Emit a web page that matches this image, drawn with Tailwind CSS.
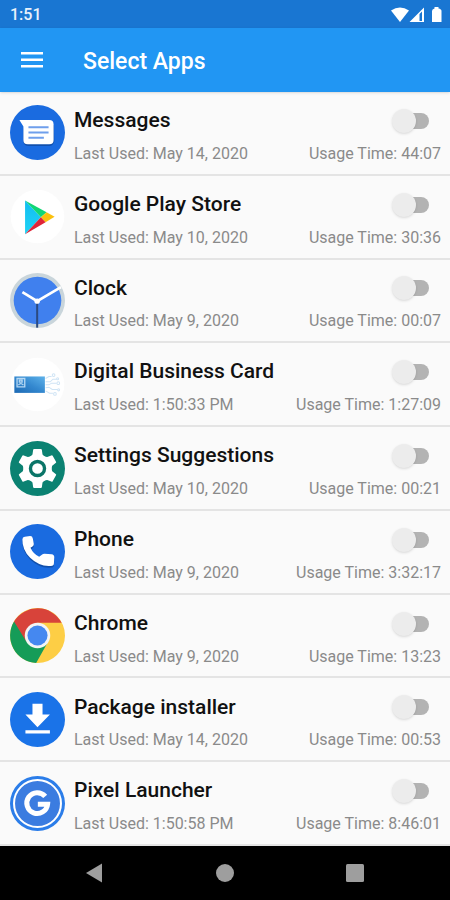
<!DOCTYPE html>
<html lang="en">
<head>
<meta charset="utf-8">
<meta name="viewport" content="width=device-width, initial-scale=1">
<title>Select Apps</title>
<script src="https://cdn.jsdelivr.net/npm/@tailwindcss/browser@4"></script>
</head>
<body class="flex min-h-screen flex-col bg-[#fafafa] font-['Roboto',sans-serif] text-[#111]">

<div class="flex h-7 shrink-0 items-center justify-between bg-[#1976d2] pt-0.5 pr-2 pl-2.5 text-white">
  <span class="text-base font-medium text-white/90">1:51</span>
  <svg class="h-4 w-[52px]" viewBox="0 0 52 16" fill="#fff" aria-hidden="true">
    <path d="M1 3.600Q10 -2.800 19 3.600L10 15z"/>
    <path fill-rule="evenodd" d="M19.500 15L34 0.500V15zM29.500 7V14H32V4.500z"/>
    <path d="M44.500 1.500V0h4v1.500Q51.500 2 51.500 4V15H42V4Q42 2 44.500 1.500z"/>
  </svg>
</div>

<header class="flex h-16 shrink-0 items-center gap-[31px] bg-[#2196f3] px-3 text-white shadow-sm">
  <button type="button" aria-label="Open menu" class="flex size-10 items-center justify-center">
    <svg class="h-4 w-[22px]" viewBox="0 0 22 16" fill="#fff"><path d="M0 0h22v2.500H0zM0 6.500h22V9H0zM0 13h22v2.500H0z"/></svg>
  </button>
  <h1 class="pt-1 text-[23px] leading-8 font-medium">Select Apps</h1>
</header>

<ul class="flex flex-1 flex-col">
  <li class="flex flex-1 items-center gap-[9px] border-b-2 border-[#e4e4e4] pr-[9px] pl-2.5">
    <svg class="size-[55px] shrink-0" viewBox="0 0 164 164" aria-hidden="true">
      <circle cx="82" cy="82" r="82" fill="#1a6be0"/>
      <path d="M40 110Q42 122 56 122H116Q130 122 132 108L131 60L40 70z" fill="#1150ad"/>
      <path d="M28 45H117Q130 45 130 58V104Q130 117 117 117H53Q40 117 40 104V64z" fill="#fff"/>
      <path d="M55 66H115M55 82H115M55 98H101" stroke="#6f9fec" stroke-width="6"/>
    </svg>
    <div class="min-w-0 flex-1 pt-2.5">
      <div class="flex h-8 items-center justify-between">
        <label for="app1" class="text-[21px] font-medium">Messages</label>
        <input id="app1" type="checkbox" role="switch" class="relative mr-3 h-6 w-[37px] appearance-none before:absolute before:top-1 before:right-0 before:h-4 before:w-8 before:rounded-full before:bg-[#b3b3b3] after:absolute after:top-0 after:left-0 after:size-6 after:rounded-full after:bg-[#ececec] after:shadow-sm checked:before:bg-[#90caf9] checked:after:left-3 checked:after:bg-[#2196f3]">
      </div>
      <p class="flex h-[34px] items-center justify-between text-base whitespace-nowrap text-[#8a8a8a]"><span>Last Used: May 14, 2020</span><span>Usage Time: 44:07</span></p>
    </div>
  </li>
  <li class="flex flex-1 items-center gap-[9px] border-b-2 border-[#e4e4e4] pr-[9px] pl-2.5">
    <svg class="size-[55px] shrink-0" viewBox="0 0 164 164" aria-hidden="true">
      <defs><linearGradient id="play" x1="0" y1="0" x2="0" y2="1"><stop offset="0" stop-color="#12bdf0"/><stop offset="1" stop-color="#1fd3f5"/></linearGradient></defs>
      <circle cx="82" cy="82" r="80" fill="#fff"/>
      <path d="M45 34L92 84L45 135z" fill="url(#play)"/>
      <path d="M45 34L109 69L92 84z" fill="#10d676"/>
      <path d="M109 69L133 83L106 99L92 84z" fill="#fbc00e"/>
      <path d="M45 135L92 84L106 99z" fill="#e02438"/>
    </svg>
    <div class="min-w-0 flex-1 pt-2.5">
      <div class="flex h-8 items-center justify-between">
        <label for="app2" class="text-[21px] font-medium">Google Play Store</label>
        <input id="app2" type="checkbox" role="switch" class="relative mr-3 h-6 w-[37px] appearance-none before:absolute before:top-1 before:right-0 before:h-4 before:w-8 before:rounded-full before:bg-[#b3b3b3] after:absolute after:top-0 after:left-0 after:size-6 after:rounded-full after:bg-[#ececec] after:shadow-sm checked:before:bg-[#90caf9] checked:after:left-3 checked:after:bg-[#2196f3]">
      </div>
      <p class="flex h-[34px] items-center justify-between text-base whitespace-nowrap text-[#8a8a8a]"><span>Last Used: May 10, 2020</span><span>Usage Time: 30:36</span></p>
    </div>
  </li>
  <li class="flex flex-1 items-center gap-[9px] border-b-2 border-[#e4e4e4] pr-[9px] pl-2.5">
    <svg class="size-[55px] shrink-0" viewBox="0 0 164 164" aria-hidden="true">
      <circle cx="82" cy="82" r="82" fill="#c9d5db"/>
      <circle cx="82" cy="82" r="71" fill="#4080ee"/>
      <path d="M81 84V163" stroke="#2c4a80" stroke-width="6"/>
      <path d="M37 57L81 84L152 42" fill="none" stroke="#fff" stroke-width="8"/>
      <circle cx="81" cy="84" r="8" fill="#fff"/>
    </svg>
    <div class="min-w-0 flex-1 pt-2.5">
      <div class="flex h-8 items-center justify-between">
        <label for="app3" class="text-[21px] font-medium">Clock</label>
        <input id="app3" type="checkbox" role="switch" class="relative mr-3 h-6 w-[37px] appearance-none before:absolute before:top-1 before:right-0 before:h-4 before:w-8 before:rounded-full before:bg-[#b3b3b3] after:absolute after:top-0 after:left-0 after:size-6 after:rounded-full after:bg-[#ececec] after:shadow-sm checked:before:bg-[#90caf9] checked:after:left-3 checked:after:bg-[#2196f3]">
      </div>
      <p class="flex h-[34px] items-center justify-between text-base whitespace-nowrap text-[#8a8a8a]"><span>Last Used: May 9, 2020</span><span>Usage Time: 00:07</span></p>
    </div>
  </li>
  <li class="flex flex-1 items-center gap-[9px] border-b-2 border-[#e4e4e4] pr-[9px] pl-2.5">
    <svg class="size-[55px] shrink-0" viewBox="0 0 164 164" aria-hidden="true">
      <defs><linearGradient id="card" x1="0" y1="1" x2="1" y2="0"><stop offset="0" stop-color="#1c69b4"/><stop offset=".5" stop-color="#3488cf"/><stop offset="1" stop-color="#5eb2ea"/></linearGradient></defs>
      <circle cx="82" cy="82" r="80" fill="#fff"/>
      <rect x="13" y="58" width="91" height="49" fill="url(#card)"/>
      <path d="M21 64H44V89H21zM28 69H36V75H28zM25 84Q32 75 40 84" fill="none" stroke="#b5d8f4" stroke-width="4"/>
      <g fill="none" stroke="#cfe4f5" stroke-width="3">
        <path d="M106 64L116 58H124M106 74H120L128 66H139M106 83H116L124 78H139M106 92L116 90L126 97H142M106 101L118 108H128"/>
        <circle cx="130" cy="54" r="4"/><circle cx="142" cy="65" r="3"/><circle cx="144" cy="78" r="4"/><circle cx="145" cy="98" r="3"/><circle cx="134" cy="110" r="4"/>
      </g>
    </svg>
    <div class="min-w-0 flex-1 pt-2.5">
      <div class="flex h-8 items-center justify-between">
        <label for="app4" class="text-[21px] font-medium">Digital Business Card</label>
        <input id="app4" type="checkbox" role="switch" class="relative mr-3 h-6 w-[37px] appearance-none before:absolute before:top-1 before:right-0 before:h-4 before:w-8 before:rounded-full before:bg-[#b3b3b3] after:absolute after:top-0 after:left-0 after:size-6 after:rounded-full after:bg-[#ececec] after:shadow-sm checked:before:bg-[#90caf9] checked:after:left-3 checked:after:bg-[#2196f3]">
      </div>
      <p class="flex h-[34px] items-center justify-between text-base whitespace-nowrap text-[#8a8a8a]"><span>Last Used: 1:50:33 PM</span><span>Usage Time: 1:27:09</span></p>
    </div>
  </li>
  <li class="flex flex-1 items-center gap-[9px] border-b-2 border-[#e4e4e4] pr-[9px] pl-2.5">
    <svg class="size-[55px] shrink-0" viewBox="0 0 164 164" aria-hidden="true">
      <defs><path id="tooth" d="M58 50L67 40L69 27Q69 24 72 24H92Q95 24 95 27L97 40L106 50z"/></defs>
      <circle cx="82" cy="82" r="82" fill="#0b8272"/>
      <g fill="#fff">
        <circle cx="82" cy="82" r="42"/>
        <use href="#tooth"/>
        <use href="#tooth" transform="rotate(60 82 82)"/>
        <use href="#tooth" transform="rotate(120 82 82)"/>
        <use href="#tooth" transform="rotate(180 82 82)"/>
        <use href="#tooth" transform="rotate(240 82 82)"/>
        <use href="#tooth" transform="rotate(300 82 82)"/>
      </g>
      <circle cx="82" cy="82" r="21" fill="#fff" stroke="#0b7568" stroke-width="10"/>
    </svg>
    <div class="min-w-0 flex-1 pt-2.5">
      <div class="flex h-8 items-center justify-between">
        <label for="app5" class="text-[21px] font-medium">Settings Suggestions</label>
        <input id="app5" type="checkbox" role="switch" class="relative mr-3 h-6 w-[37px] appearance-none before:absolute before:top-1 before:right-0 before:h-4 before:w-8 before:rounded-full before:bg-[#b3b3b3] after:absolute after:top-0 after:left-0 after:size-6 after:rounded-full after:bg-[#ececec] after:shadow-sm checked:before:bg-[#90caf9] checked:after:left-3 checked:after:bg-[#2196f3]">
      </div>
      <p class="flex h-[34px] items-center justify-between text-base whitespace-nowrap text-[#8a8a8a]"><span>Last Used: May 10, 2020</span><span>Usage Time: 00:21</span></p>
    </div>
  </li>
  <li class="flex flex-1 items-center gap-[9px] border-b-2 border-[#e4e4e4] pr-[9px] pl-2.5">
    <svg class="size-[55px] shrink-0" viewBox="0 0 164 164" aria-hidden="true">
      <defs><path id="handset" d="M37 46Q37 39 44 38L60 36Q67 36 68 43L71 60Q71 65 67 67L61 71Q69 89 87 98L95 92Q98 89 103 89L124 90Q132 91 132 99L131 117Q131 125 122 125Q88 128 60 101Q36 76 37 46z"/></defs>
      <circle cx="82" cy="82" r="82" fill="#1a6be0"/>
      <use href="#handset" y="5" fill="#1150ad"/>
      <use href="#handset" fill="#fff"/>
    </svg>
    <div class="min-w-0 flex-1 pt-2.5">
      <div class="flex h-8 items-center justify-between">
        <label for="app6" class="text-[21px] font-medium">Phone</label>
        <input id="app6" type="checkbox" role="switch" class="relative mr-3 h-6 w-[37px] appearance-none before:absolute before:top-1 before:right-0 before:h-4 before:w-8 before:rounded-full before:bg-[#b3b3b3] after:absolute after:top-0 after:left-0 after:size-6 after:rounded-full after:bg-[#ececec] after:shadow-sm checked:before:bg-[#90caf9] checked:after:left-3 checked:after:bg-[#2196f3]">
      </div>
      <p class="flex h-[34px] items-center justify-between text-base whitespace-nowrap text-[#8a8a8a]"><span>Last Used: May 9, 2020</span><span>Usage Time: 3:32:17</span></p>
    </div>
  </li>
  <li class="flex flex-1 items-center gap-[9px] border-b-2 border-[#e4e4e4] pr-[9px] pl-2.5">
    <svg class="size-[55px] shrink-0" viewBox="0 0 164 164" aria-hidden="true">
      <circle cx="82" cy="82" r="82" fill="#fdce45"/>
      <path d="M82 82L114 100L78 164A82 82 0 0 1 12 40z" fill="#159c58"/>
      <path d="M12 40A82 82 0 0 1 154 44H82L49 101z" fill="#d8433a"/>
      <circle cx="82" cy="82" r="38" fill="#f4f4f4"/>
      <circle cx="82" cy="82" r="30" fill="#4588f0"/>
    </svg>
    <div class="min-w-0 flex-1 pt-2.5">
      <div class="flex h-8 items-center justify-between">
        <label for="app7" class="text-[21px] font-medium">Chrome</label>
        <input id="app7" type="checkbox" role="switch" class="relative mr-3 h-6 w-[37px] appearance-none before:absolute before:top-1 before:right-0 before:h-4 before:w-8 before:rounded-full before:bg-[#b3b3b3] after:absolute after:top-0 after:left-0 after:size-6 after:rounded-full after:bg-[#ececec] after:shadow-sm checked:before:bg-[#90caf9] checked:after:left-3 checked:after:bg-[#2196f3]">
      </div>
      <p class="flex h-[34px] items-center justify-between text-base whitespace-nowrap text-[#8a8a8a]"><span>Last Used: May 9, 2020</span><span>Usage Time: 13:23</span></p>
    </div>
  </li>
  <li class="flex flex-1 items-center gap-[9px] border-b-2 border-[#e4e4e4] pr-[9px] pl-2.5">
    <svg class="size-[55px] shrink-0" viewBox="0 0 164 164" aria-hidden="true">
      <circle cx="82" cy="82" r="82" fill="#1a73e8"/>
      <path d="M67 35H97V67H119L82 105L46 67H67zM46 114H119V124H46z" fill="#fff"/>
    </svg>
    <div class="min-w-0 flex-1 pt-2.5">
      <div class="flex h-8 items-center justify-between">
        <label for="app8" class="text-[21px] font-medium">Package installer</label>
        <input id="app8" type="checkbox" role="switch" class="relative mr-3 h-6 w-[37px] appearance-none before:absolute before:top-1 before:right-0 before:h-4 before:w-8 before:rounded-full before:bg-[#b3b3b3] after:absolute after:top-0 after:left-0 after:size-6 after:rounded-full after:bg-[#ececec] after:shadow-sm checked:before:bg-[#90caf9] checked:after:left-3 checked:after:bg-[#2196f3]">
      </div>
      <p class="flex h-[34px] items-center justify-between text-base whitespace-nowrap text-[#8a8a8a]"><span>Last Used: May 14, 2020</span><span>Usage Time: 00:53</span></p>
    </div>
  </li>
  <li class="flex flex-1 items-center gap-[9px] border-b-2 border-[#e4e4e4] pr-[9px] pl-2.5">
    <svg class="size-[55px] shrink-0" viewBox="0 0 164 164" aria-hidden="true">
      <circle cx="82" cy="82" r="82" fill="#2b7de9"/>
      <circle cx="82" cy="82" r="70" fill="#3b7ce0" stroke="#fff" stroke-width="6"/>
      <path d="M105 61A31 31 0 1 0 112 84H83" fill="none" stroke="#fff" stroke-width="15"/>
    </svg>
    <div class="min-w-0 flex-1 pt-2.5">
      <div class="flex h-8 items-center justify-between">
        <label for="app9" class="text-[21px] font-medium">Pixel Launcher</label>
        <input id="app9" type="checkbox" role="switch" class="relative mr-3 h-6 w-[37px] appearance-none before:absolute before:top-1 before:right-0 before:h-4 before:w-8 before:rounded-full before:bg-[#b3b3b3] after:absolute after:top-0 after:left-0 after:size-6 after:rounded-full after:bg-[#ececec] after:shadow-sm checked:before:bg-[#90caf9] checked:after:left-3 checked:after:bg-[#2196f3]">
      </div>
      <p class="flex h-[34px] items-center justify-between text-base whitespace-nowrap text-[#8a8a8a]"><span>Last Used: 1:50:58 PM</span><span>Usage Time: 8:46:01</span></p>
    </div>
  </li>
</ul>

<nav aria-label="System" class="flex h-[54px] shrink-0 bg-black px-[30px]">
  <button type="button" aria-label="Back" class="flex flex-1 items-center justify-center"><svg class="size-5" viewBox="0 0 20 20" fill="#9e9e9e"><path d="M1 10L17 0.500V19.500z"/></svg></button>
  <button type="button" aria-label="Home" class="flex flex-1 items-center justify-center"><svg class="size-5" viewBox="0 0 20 20" fill="#9e9e9e"><circle cx="10" cy="10" r="9"/></svg></button>
  <button type="button" aria-label="Recent apps" class="flex flex-1 items-center justify-center"><svg class="size-5" viewBox="0 0 20 20" fill="#9e9e9e"><rect x="1" y="1" width="18" height="18" rx="1.500"/></svg></button>
</nav>

</body>
</html>
